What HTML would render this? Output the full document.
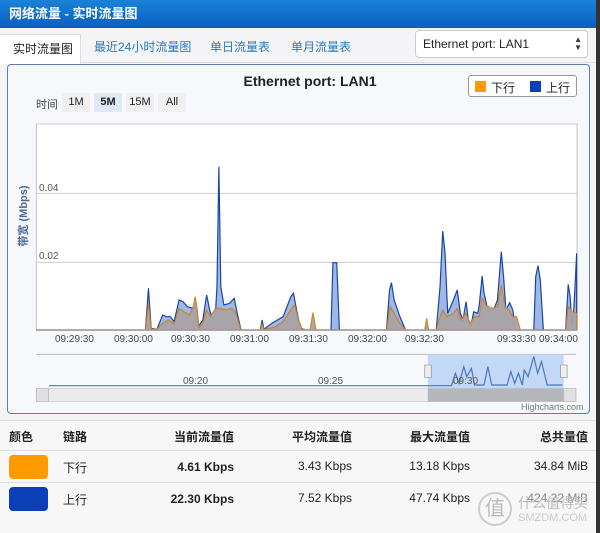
<!DOCTYPE html>
<html><head><meta charset="utf-8"><style>
*{margin:0;padding:0;box-sizing:border-box}
body{width:600px;height:533px;overflow:hidden;background:#f4f4f6;font-family:"Liberation Sans","Noto Sans CJK SC",sans-serif;position:relative;font-size:12px;color:#222}
.abs{position:absolute}
#hdr{left:0;top:0;width:600px;height:28px;background:linear-gradient(#1a82d8,#0a5fc0);color:#fff;font-weight:bold;font-size:13px;line-height:28px;padding-left:9px}
#tabs{left:0;top:28px;width:596px;height:35px;background:#f4f4f6;border-bottom:1px solid #ddd}
.tab{position:absolute;top:6px;font-size:12px;color:#2a7ab8}
#act{left:0;top:34px;width:81px;height:30px;background:#fff;border:1px solid #ddd;border-bottom:none;border-left:none;font-size:12px;padding:5px 0 0 13px}
#sel{left:415px;top:30px;width:173px;height:28px;background:#fff;border:1px solid #ccc;border-radius:4px;font-size:12px;padding:6px 0 0 7px}
#panel{left:7px;top:64px;width:583px;height:350px;background:#f7f8fc;border:1px solid #5a7fb0;border-radius:4px}
#rs{right:0;top:0;width:4px;height:533px;background:#333}
.th{top:428px;font-weight:bold;font-size:12px}
.td{font-size:12px}
</style></head><body>
<div id="hdr" class="abs">网络流量 - 实时流量图</div>
<div id="tabs" class="abs"></div>
<div id="act" class="abs">实时流量图</div>
<div class="tab abs" style="left:94px;top:38px">最近24小时流量图</div>
<div class="tab abs" style="left:210px;top:38px">单日流量表</div>
<div class="tab abs" style="left:291px;top:38px">单月流量表</div>
<div id="sel" class="abs">Ethernet port: LAN1<span style="position:absolute;right:5px;top:5px;font-size:8px;line-height:8px;color:#333">▲<br>▼</span></div>
<div id="panel" class="abs"></div>
<div class="abs" style="left:0;top:73px;width:620px;text-align:center;font-weight:bold;font-size:14px">Ethernet port: LAN1</div>
<div class="abs" style="left:468px;top:75px;width:109px;height:22px;border:1px solid #999;border-radius:3px;background:#fff;font-size:12px">
<span class="abs" style="left:6px;top:5px;width:11px;height:11px;background:#f90"></span><span class="abs" style="left:22px;top:3px">下行</span>
<span class="abs" style="left:61px;top:5px;width:11px;height:11px;background:#0a3fb8"></span><span class="abs" style="left:77px;top:3px">上行</span></div>
<div class="abs" style="left:36px;top:96px;font-size:11px;color:#444">时间</div>
<div class="abs" style="left:62px;top:93px;width:28px;height:19px;background:#f0f0f0;font-size:11px;text-align:center;line-height:19px">1M</div>
<div class="abs" style="left:94px;top:93px;width:28px;height:19px;background:#dfe8f4;font-size:11px;font-weight:bold;text-align:center;line-height:19px">5M</div>
<div class="abs" style="left:126px;top:93px;width:28px;height:19px;background:#f0f0f0;font-size:11px;text-align:center;line-height:19px">15M</div>
<div class="abs" style="left:158px;top:93px;width:28px;height:19px;background:#f0f0f0;font-size:11px;text-align:center;line-height:19px">All</div>
<div class="abs" style="left:-12px;top:208px;transform:rotate(-90deg);font-size:11px;font-weight:bold;color:#4a6a98;width:70px;text-align:center">带宽 (Mbps)</div>
<svg class="abs" style="left:0;top:120px" width="600" height="300" viewBox="0 0 1568 900" preserveAspectRatio="none">
<rect x="95" y="12" width="1413" height="618" fill="#fff" stroke="#ccc" stroke-width="3"/>
<line x1="95" y1="220" x2="1508" y2="220" stroke="#ccc" stroke-width="3"/>
<line x1="95" y1="427" x2="1508" y2="427" stroke="#ccc" stroke-width="3"/>
<path d="M95,630 L380,630 L388,505 L395,625 L410,628 L425,585 L435,590 L445,590 L455,605 L468,540 L478,545 L490,560 L505,565 L510,560 L518,620 L530,600 L540,525 L548,570 L555,600 L563,580 L567,500 L572,140 L577,500 L585,555 L600,550 L612,535 L620,580 L630,630 L680,630 L685,600 L690,628 L710,610 L725,600 L740,590 L760,530 L767,520 L775,570 L785,625 L800,630 L865,630 L870,428 L880,428 L887,630 L1010,630 L1018,510 L1023,488 L1030,540 L1045,590 L1060,630 L1140,630 L1150,500 L1157,333 L1163,400 L1170,580 L1185,540 L1195,510 L1203,580 L1210,600 L1218,545 L1224,600 L1230,620 L1238,575 L1248,580 L1252,560 L1260,468 L1265,520 L1275,570 L1290,570 L1300,540 L1310,395 L1316,470 L1322,570 L1332,548 L1340,570 L1348,630 L1395,630 L1400,470 L1406,437 L1412,480 L1420,630 L1478,630 L1485,493 L1490,530 L1495,620 L1500,560 L1507,400 L1507,630 Z" fill="#9fb8e4" stroke="#1a45a8" stroke-width="1.2" vector-effect="non-scaling-stroke"/>
<path d="M95,630 L380,630 L388,550 L395,627 L410,628 L425,610 L440,600 L455,612 L468,565 L480,575 L495,585 L505,560 L510,530 L515,565 L520,622 L530,610 L540,570 L550,590 L563,565 L575,565 L590,570 L605,565 L615,575 L630,630 L680,630 L685,612 L690,629 L720,620 L740,605 L760,570 L770,555 L780,600 L790,628 L810,630 L818,578 L826,630 L1010,630 L1020,560 L1030,580 L1045,610 L1060,630 L1110,630 L1115,595 L1120,630 L1140,630 L1150,590 L1157,570 L1168,590 L1185,580 L1195,565 L1205,600 L1218,580 L1228,610 L1240,590 L1252,590 L1260,535 L1270,555 L1285,565 L1300,560 L1310,495 L1320,560 L1330,570 L1340,590 L1350,590 L1360,630 L1478,630 L1485,560 L1495,575 L1507,580 L1507,630 Z" fill="#aaa3a6" stroke="#c8822a" stroke-width="1.2" vector-effect="non-scaling-stroke" opacity="0.95"/>
<line x1="95" y1="630" x2="1508" y2="630" stroke="#999" stroke-width="3"/>
<rect x="95" y="703" width="1410" height="102" fill="#f7f8fc"/>
<line x1="95" y1="703" x2="1505" y2="703" stroke="#bbb" stroke-width="3"/>
<rect x="1118" y="703" width="355" height="102" fill="#c3d8f6"/>
<path d="M128,797 L1180,797 L1190,760 L1200,790 L1212,740 L1220,770 L1232,745 L1240,795 L1265,795 L1275,740 L1285,795 L1325,795 L1335,755 L1345,790 L1355,760 L1365,795 L1370,750 L1380,770 L1395,710 L1405,760 L1415,725 L1430,795 L1470,795" fill="none" stroke="#4a78b8" stroke-width="1.2" vector-effect="non-scaling-stroke"/>
<rect x="95" y="805" width="1410" height="40" fill="#ebebeb" stroke="#ccc" stroke-width="2"/>
<rect x="1118" y="805" width="355" height="40" fill="#b4b8bd"/>
<rect x="95" y="805" width="32" height="40" fill="#e0e0e0" stroke="#bbb" stroke-width="2"/>
<rect x="1473" y="805" width="32" height="40" fill="#e0e0e0" stroke="#bbb" stroke-width="2"/>
<rect x="1110" y="735" width="17" height="38" fill="#eee" stroke="#999" stroke-width="2"/>
<rect x="1465" y="735" width="17" height="38" fill="#eee" stroke="#999" stroke-width="2"/>
</svg>
<div class="abs" style="left:39px;top:183px;font-size:10px;color:#555">0.04</div>
<div class="abs" style="left:39px;top:251px;font-size:10px;color:#555">0.02</div>
<div class="abs" style="top:334px;left:0;font-size:10px;color:#444">
<span class="abs" style="left:55px">09:29:30</span><span class="abs" style="left:114px">09:30:00</span><span class="abs" style="left:171px">09:30:30</span><span class="abs" style="left:230px">09:31:00</span><span class="abs" style="left:289px">09:31:30</span><span class="abs" style="left:348px">09:32:00</span><span class="abs" style="left:405px">09:32:30</span><span class="abs" style="left:497px">09:33:30</span><span class="abs" style="left:539px">09:34:00</span></div>
<div class="abs" style="top:376px;left:0;font-size:10px;color:#555"><span class="abs" style="left:183px">09:20</span><span class="abs" style="left:318px">09:25</span><span class="abs" style="left:453px">09:30</span></div>
<div class="abs" style="left:521px;top:402px;font-size:9px;color:#777">Highcharts.com</div>
<div class="abs" style="left:0;top:420px;width:596px;height:113px;background:#f7f7f7;border-top:1px solid #ddd"></div>
<div class="abs" style="left:0;top:450px;width:596px;border-top:1px solid #ddd"></div>
<div class="abs" style="left:0;top:482px;width:596px;border-top:1px solid #ddd"></div>
<div class="th abs" style="left:9px">颜色</div><div class="th abs" style="left:63px">链路</div>
<div class="th abs" style="right:366px">当前流量值</div><div class="th abs" style="right:248px">平均流量值</div><div class="th abs" style="right:130px">最大流量值</div><div class="th abs" style="right:12px">总共量值</div>
<div class="abs" style="left:9px;top:455px;width:39px;height:24px;background:#f90;border-radius:4px"></div>
<div class="abs" style="left:9px;top:487px;width:39px;height:24px;background:#0a3fb8;border-radius:4px"></div>
<div class="td abs" style="left:63px;top:459px">下行</div><div class="td abs" style="left:63px;top:491px">上行</div>
<div class="td abs" style="right:366px;top:460px;font-weight:bold">4.61 Kbps</div><div class="td abs" style="right:248px;top:459px">3.43 Kbps</div><div class="td abs" style="right:130px;top:459px">13.18 Kbps</div><div class="td abs" style="right:12px;top:459px">34.84 MiB</div>
<div class="td abs" style="right:366px;top:492px;font-weight:bold">22.30 Kbps</div><div class="td abs" style="right:248px;top:491px">7.52 Kbps</div><div class="td abs" style="right:130px;top:491px">47.74 Kbps</div><div class="td abs" style="right:12px;top:491px;color:#888">424.22 MiB</div>
<div class="abs" style="left:478px;top:492px;width:34px;height:34px;border:2px solid #ccc;border-radius:50%;color:#bbb;font-size:20px;text-align:center;line-height:30px">值</div>
<div class="abs" style="left:518px;top:493px;color:#bbb;font-size:14px">什么值得买</div>
<div class="abs" style="left:518px;top:512px;color:#ccc;font-size:11px">SMZDM.COM</div>
<div id="rs" class="abs"></div>
</body></html>
